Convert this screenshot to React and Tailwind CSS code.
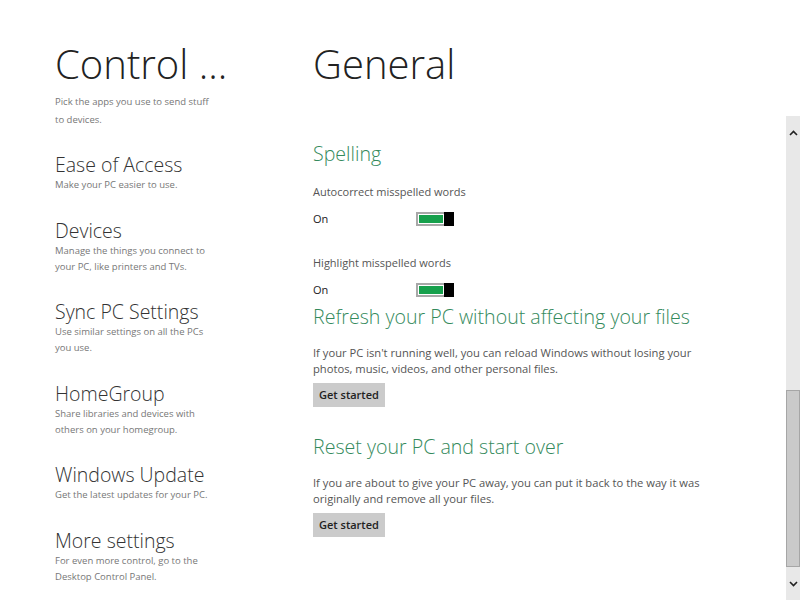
import React from 'react';

const font = { fontFamily: '"Open Sans", "Noto Sans", sans-serif' };

const items = [
    { title: 'Ease of Access', desc: ['Make your PC easier to use.'] },
    { title: 'Devices', desc: ['Manage the things you connect to', 'your PC, like printers and TVs.'] },
    { title: 'Sync PC Settings', desc: ['Use similar settings on all the PCs', 'you use.'] },
    { title: 'HomeGroup', desc: ['Share libraries and devices with', 'others on your homegroup.'] },
    { title: 'Windows Update', desc: ['Get the latest updates for your PC.'] },
    { title: 'More settings', desc: ['For even more control, go to the', 'Desktop Control Panel.'] },
];

const Toggle = () => (
    <div className="flex h-[14px] w-[38px] border-2 border-[#a8a8a8] bg-white">
        <div className="flex-1 border border-white bg-[#16a04c]" />
        <div className="w-[10px] bg-black -my-[2px] -mr-[2px]" />
    </div>
);

const Setting = ({ label }) => (
    <div>
        <div className="text-[11px] leading-[16px] text-[#555]">{label}</div>
        <div className="mt-[11px] flex items-center">
            <span className="w-[103px] text-[11px] text-[#222]">On</span>
            <Toggle />
        </div>
    </div>
);

const Section = ({ title, lines }) => (
    <div>
        <div className="text-[19.6px] font-light leading-[28px] text-[#348a5c]">{title}</div>
        <div className="mt-[14px] text-[11.2px] leading-[16px] text-[#555]">
            {lines.map((l) => <div key={l}>{l}</div>)}
        </div>
        <button className="mt-[6px] h-[24px] bg-[#cbcbcb] px-[6px] text-[11px] font-semibold text-[#222]">
            Get started
        </button>
    </div>
);

export default function App() {
    return (
        <div className="flex h-[600px] w-[800px] overflow-hidden bg-white" style={font}>
            <div className="w-[258px] shrink-0 pl-[55px] pt-[36px]">
                <div className="text-[40px] font-light leading-[56px] text-[#222]">Control ...</div>
                <div className="mt-[1px] text-[9.5px] leading-[18px] text-[#777]">
                    <div>Pick the apps you use to send stuff</div>
                    <div>to devices.</div>
                </div>
                <div className="mt-[24px] flex flex-col gap-[25.5px]">
                    {items.map((it) => (
                        <div key={it.title}>
                            <div className="text-[19.5px] font-light leading-[24px] text-[#333]">{it.title}</div>
                            <div className="text-[9.5px] leading-[16px] text-[#777]">
                                {it.desc.map((d) => <div key={d}>{d}</div>)}
                            </div>
                        </div>
                    ))}
                </div>
            </div>
            <div className="flex-1 pl-[55px] pt-[36px]">
                <div className="text-[40px] font-light leading-[56px] text-[#222]">General</div>
                <div className="mt-[48px] text-[19.6px] font-light leading-[28px] text-[#348a5c]">Spelling</div>
                <div className="mt-[16px] flex flex-col gap-[27px]">
                    <Setting label="Autocorrect misspelled words" />
                    <Setting label="Highlight misspelled words" />
                </div>
                <div className="mt-[5px] flex flex-col gap-[26px]">
                    <Section
                        title="Refresh your PC without affecting your files"
                        lines={[
                            "If your PC isn't running well, you can reload Windows without losing your",
                            'photos, music, videos, and other personal files.',
                        ]}
                    />
                    <Section
                        title="Reset your PC and start over"
                        lines={[
                            'If you are about to give your PC away, you can put it back to the way it was',
                            'originally and remove all your files.',
                        ]}
                    />
                </div>
            </div>
            <div className="mt-[116px] flex w-[14px] shrink-0 flex-col bg-[#e8e8e8]">
                <div className="flex h-[34px] items-center justify-center">
                    <svg width="9" height="6" viewBox="0 0 9 6"><path d="M1 5 L4.5 1.5 L8 5" fill="none" stroke="#222" strokeWidth="1.6" /></svg>
                </div>
                <div className="h-[240px]" />
                <div className="h-[177px] border border-[#a6a6a6] bg-[#cacaca]" />
                <div className="flex flex-1 items-center justify-center">
                    <svg width="9" height="6" viewBox="0 0 9 6"><path d="M1 1 L4.5 4.5 L8 1" fill="none" stroke="#222" strokeWidth="1.6" /></svg>
                </div>
            </div>
        </div>
    );
}
